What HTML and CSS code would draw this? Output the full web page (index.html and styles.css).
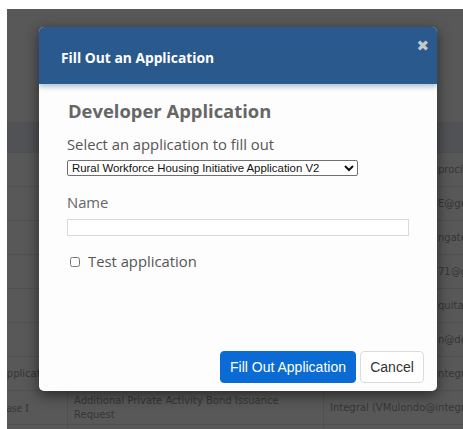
FILE: index.html
```html
<!DOCTYPE html>
<html>
<head>
<meta charset="utf-8">
<title>Fill Out an Application</title>
<link rel="stylesheet" href="styles.css">
</head>
<body>
<div class="page">
  <div class="top-band"></div>
  <div class="grid">
    <div class="row head"><div class="c1"></div><div class="c2"></div><div class="c3"></div></div>
    <div class="row"><div class="c1"></div><div class="c2"></div><div class="c3"><span class="who">Lindsey Harper (j</span>procio@gmail.com</div></div>
    <div class="row"><div class="c1"></div><div class="c2"></div><div class="c3"><span class="who">Pine Ridge (PINERIDG</span>E@gmail.com</div></div>
    <div class="row"><div class="c1"></div><div class="c2"></div><div class="c3"><span class="who">Highgate Homes (hi</span>ngate@hgh.com</div></div>
    <div class="row"><div class="c1"></div><div class="c2"></div><div class="c3"><span class="who">Tom Reyes (treyes</span>71@gmail.com</div></div>
    <div class="row"><div class="c1"></div><div class="c2"></div><div class="c3"><span class="who">Equitable (info@e</span>quitable.org</div></div>
    <div class="row"><div class="c1"></div><div class="c2"></div><div class="c3"><span class="who">Joe Brown (jbrow</span>n@dcha.org</div></div>
    <div class="row"><div class="c1 lead-a">Application</div><div class="c2"></div><div class="c3">Integral (VMulondo@integral.com)</div></div>
    <div class="row"><div class="c1 lead-b">Phase I</div><div class="c2">Additional Private Activity Bond Issuance Request</div><div class="c3">Integral (VMulondo@integral.com)</div></div>
    <div class="row"><div class="c1"></div><div class="c2"></div><div class="c3"></div></div>
  </div>
  <div class="overlay"></div>

  <div class="modal">
    <div class="modal-header">
      <h3 class="modal-title">Fill Out an Application</h3>
      <span class="close">&#10006;</span>
    </div>
    <div class="modal-body">
      <h2 class="form-title">Developer Application</h2>
      <label class="label">Select an application to fill out</label>
      <select class="select">
        <option>Rural Workforce Housing Initiative Application V2</option>
      </select>
      <label class="label name-label">Name</label>
      <input class="input" type="text">
      <label class="check"><input type="checkbox"> Test application</label>
    </div>
    <div class="modal-footer">
      <button class="btn primary">Fill Out Application</button>
      <button class="btn default">Cancel</button>
    </div>
  </div>
</div>
</body>
</html>
```

FILE: styles.css
```css
html, body {
  margin: 0;
  background: #ffffff;
}

body {
  padding: 9px 0 0 7px;
  font-family: "Open Sans", "DejaVu Sans", sans-serif;
}

.page {
  position: relative;
  height: 420px;
  overflow: hidden;
  background: #fdfdfd;
}

/* page content behind the dialog */
.top-band {
  height: 113px;
}

.grid {
  margin-left: -46px;
  font-family: "DejaVu Sans", Verdana, sans-serif;
  font-size: 10px;
  color: #9a9a9a;
}

.row {
  display: grid;
  grid-template-columns: 106px 256px 1fr;
  height: 34px;
  border-top: 1px solid #e6e6e6;
  box-sizing: border-box;
}

.row.head {
  height: 30px;
  background: #e6ecf3;
}

.row > div {
  display: flex;
  align-items: center;
  white-space: nowrap;
  overflow: hidden;
  padding-left: 6px;
  line-height: 14px;
}

.row .c2 {
  border-left: 1px solid #e6e6e6;
  white-space: normal;
  padding-right: 40px;
}

.row .c3 {
  border-left: 1px solid #e6e6e6;
}

.who {
  display: inline-block;
  flex-shrink: 0;
  width: 108px;
  overflow: hidden;
  white-space: nowrap;
}

.row .lead-a {
  padding-left: 39px;
}

.row .lead-b {
  padding-left: 33px;
  font-family: "Liberation Serif", serif;
  font-size: 12px;
}

.overlay {
  position: absolute;
  inset: 0;
  background: rgba(0, 0, 0, 0.65);
}

/* dialog */
.modal {
  position: absolute;
  left: 32px;
  top: 18px;
  width: 398px;
  height: 364px;
  display: flex;
  flex-direction: column;
  background: #fdfdfd;
  border-radius: 5px;
  box-shadow: 0 4px 14px rgba(0, 0, 0, 0.55);
}

.modal-header {
  position: relative;
  height: 57px;
  display: flex;
  align-items: center;
  padding-left: 22px;
  background: #2a5a8d;
  border-radius: 5px 5px 0 0;
  box-shadow: 0 3px 5px rgba(42, 90, 141, 0.35);
  z-index: 1;
}

.modal-title {
  margin: 0;
  color: #ffffff;
  font-size: 13.8px;
  font-weight: bold;
  padding-top: 3px;
}

.close {
  position: absolute;
  right: 8px;
  top: 11px;
  color: #c6c9cc;
  font-size: 15px;
  font-weight: bold;
  line-height: 16px;
  font-family: "DejaVu Sans", sans-serif;
}

.modal-body {
  flex: 1;
  padding: 15px 28px 0 28px;
  display: flex;
  flex-direction: column;
  align-items: flex-start;
  color: #555;
}

.form-title {
  margin: 0 0 12px 1px;
  font-size: 18.4px;
  line-height: 24px;
  font-weight: bold;
  color: #666;
}

.label {
  font-size: 14.8px;
  line-height: 19px;
  color: #555;
  margin-bottom: 6px;
}

.name-label {
  margin-top: 17px;
  margin-bottom: 7px;
  color: #666;
}

.select {
  width: 291px;
  height: 16px;
  padding: 0;
  font-family: "Liberation Sans", Arial, sans-serif;
  font-size: 11.4px;
  color: #111;
  background: #fff;
  border: 1px solid #6f6f6f;
  border-radius: 2px;
  margin: 0;
}

.input {
  width: 342px;
  height: 17px;
  box-sizing: border-box;
  border: 1px solid #dadada;
  margin: 0;
  padding: 0;
  background: #fff;
}

.check {
  margin-top: 16px;
  margin-left: 3px;
  font-size: 14.8px;
  line-height: 19px;
  color: #555;
  display: flex;
  align-items: center;
  gap: 8px;
}

.check input {
  margin: 0;
  width: 10px;
  height: 10px;
}

.modal-footer {
  display: flex;
  justify-content: flex-end;
  gap: 4px;
  padding: 0 13px 8px 0;
}

.btn {
  height: 32px;
  font-family: "Liberation Sans", Arial, sans-serif;
  font-size: 14px;
  border-radius: 4px;
  padding: 0;
  cursor: pointer;
  white-space: nowrap;
}

.primary {
  width: 136px;
  background: #0b6bd5;
  border: 1px solid #0b6bd5;
  color: #fff;
}

.default {
  width: 64px;
  background: #fff;
  border: 1px solid #dcdcdc;
  color: #333;
}
```
